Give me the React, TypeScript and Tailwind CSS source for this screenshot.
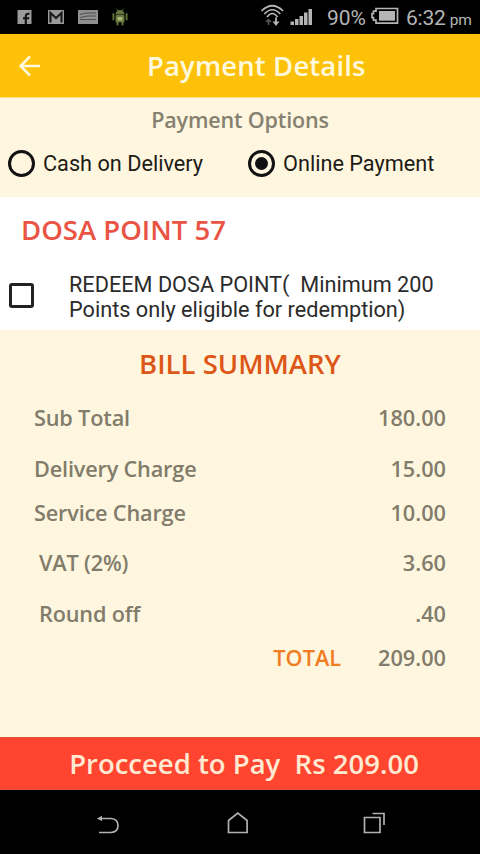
import { useState } from "react";

interface BillRow {
    label: string;
    amount: string;
    className: string;
}

const billRows: BillRow[] = [
    { label: "Sub Total", amount: "180.00", className: "h-[51px] pl-[34px]" },
    { label: "Delivery Charge", amount: "15.00", className: "h-[50px] pl-[34px]" },
    { label: "Service Charge", amount: "10.00", className: "h-[38px] pl-[34px]" },
    { label: "VAT (2%)", amount: "3.60", className: "h-[63px] pl-[39px]" },
    { label: "Round off", amount: ".40", className: "h-[38px] pl-[39px]" },
];

function StatusBar() {
    return (
        <div className="h-[34px] bg-black flex items-center text-[#b5b5b5] font-['Roboto',sans-serif]">
            <svg className="w-[130px] h-[34px]" viewBox="0 0 130 34">
                {/* Facebook */}
                <rect x="17.5" y="10" width="14" height="14" fill="#9a9a9a" />
                <path d="M25.8 24v-7.500q0-3.300 3.700-2.700M23 18.300h6.200" stroke="#111" strokeWidth="2.100" fill="none" />
                {/* Gmail */}
                <rect x="48" y="10" width="16" height="14" fill="#9a9a9a" />
                <path d="M50.500 22.500V13l5.500 5 5.500-5v9.500" stroke="#1c1c1c" strokeWidth="2.200" fill="none" />
                {/* Keyboard */}
                <rect x="78" y="10" width="20" height="14" fill="#8f8f8f" />
                <path d="M80 14.500l6-1.500h10M80 17.500l8-1.500h8M80 19.500h16" stroke="#505050" strokeWidth="1" fill="none" />
                {/* Android */}
                <g fill="#66753d">
                    <path d="M115.500 14.500q.5-4.500 4.500-4.500t4.500 4.500z" />
                    <rect x="115.500" y="15" width="9" height="7.500" rx="1" />
                    <rect x="112.500" y="13" width="1.800" height="7.500" rx=".9" />
                    <rect x="125.700" y="13" width="1.800" height="7.500" rx=".9" />
                    <rect x="116.500" y="22" width="2" height="3.500" rx=".9" />
                    <rect x="121.500" y="22" width="2" height="3.500" rx=".9" />
                    <path d="M116.500 8.500l1.500 2.500M123.500 8.500l-1.500 2.500" stroke="#66753d" strokeWidth=".8" />
                </g>
                <rect x="117.500" y="17" width="5" height="3.500" fill="#a9b577" />
            </svg>
            <svg className="w-[56px] h-[34px] ml-[130px]" viewBox="260 0 56 34">
                {/* Wi-Fi with transfer arrows */}
                <g fill="none" stroke="#b5b5b5" strokeWidth="1.700">
                    <path d="M261.500 11q10.800-10.500 21.600 0" />
                    <path d="M264.300 14q8-8.500 16 0" />
                    <path d="M267 17q5.300-7 10.600 0" />
                </g>
                <path d="M268.500 25v-5" stroke="#555" strokeWidth="1.600" />
                <path d="M265 22l3.500-3.500 3.500 3.500z" fill="#555" />
                <path d="M276 17.500v4.500" stroke="#b5b5b5" strokeWidth="1.800" />
                <path d="M272.500 21.500h7l-3.500 4.500z" fill="#b5b5b5" />
                <g fill="#b5b5b5">
                    <rect x="290.500" y="21.500" width="3.500" height="3.500" />
                    <rect x="295" y="19" width="3.500" height="6" />
                    <rect x="299.500" y="16" width="3.500" height="9" />
                    <rect x="304" y="12.500" width="3.500" height="12.500" />
                    <rect x="308.500" y="9" width="3.500" height="16" />
                </g>
            </svg>
            <span className="ml-[11px] w-[44px] text-[21px] leading-[34px] pt-px whitespace-nowrap">90%</span>
            <svg className="w-[28px] h-[34px]" viewBox="371 0 28 34">
                <path d="M376 8.500h21.500v14.700h-21.500v-3h-2.500v-2.500h-1.500v-4h1.500v-2.500h2.500z" fill="none" stroke="#b5b5b5" strokeWidth="1.700" />
                <rect x="379" y="11" width="16" height="9.700" fill="#b5b5b5" />
            </svg>
            <span className="ml-[7px] text-[21px] leading-[34px] pt-px whitespace-nowrap tracking-[-0.2px]">6:32</span>
            <span className="ml-[4px] text-[15.500px] leading-[34px] pt-[5px] tracking-[-0.1px]">pm</span>
        </div>
    );
}

function RadioOption({ label, checked, onSelect }: { label: string; checked: boolean; onSelect: () => void }) {
    return (
        <button role="radio" aria-checked={checked} onClick={onSelect} className="w-[240px] pl-2 flex items-center">
            <span className="w-[27px] h-[27px] rounded-full border-3 border-[#111] flex items-center justify-center shrink-0">
                {checked && <span className="w-[13px] h-[13px] rounded-full bg-[#111]" />}
            </span>
            <span className="ml-2 text-[21.700px] leading-[26px] text-[#1d1b16] whitespace-nowrap">{label}</span>
        </button>
    );
}

export default function App() {
    const [method, setMethod] = useState("online");
    const [redeem, setRedeem] = useState(false);

    return (
        <div className="w-[480px] h-[854px] flex flex-col overflow-hidden bg-[#fff6df] font-['Open_Sans',sans-serif]">
            <StatusBar />

            {/* Header */}
            <header className="h-[64px] bg-[#fec10a] border-b border-[#ffdf80] flex items-center shrink-0">
                <svg className="w-[24px] h-[24px] ml-[18px]" viewBox="0 0 24 24" fill="none" stroke="#fff9dc" strokeWidth="2.500">
                    <path d="M22 12H2.500M12 2.500L2.500 12l9.500 9.500" />
                </svg>
                <h1 className="ml-[105px] text-[27.500px] leading-[36px] font-semibold tracking-[0.120px] text-[#fff9dc] whitespace-nowrap">Payment Details</h1>
            </header>

            {/* Payment options */}
            <section className="h-[99px] shrink-0">
                <h2 className="pt-[7px] text-center text-[21.500px] leading-[29px] font-semibold tracking-[-0.150px] text-[#858070]">Payment Options</h2>
                <div role="radiogroup" className="mt-[16px] flex font-['Roboto',sans-serif]">
                    <RadioOption label="Cash on Delivery" checked={method === "cash"} onSelect={() => setMethod("cash")} />
                    <RadioOption label="Online Payment" checked={method === "online"} onSelect={() => setMethod("online")} />
                </div>
            </section>

            {/* Loyalty points */}
            <section className="h-[133px] shrink-0 bg-white">
                <h2 className="pl-[21px] pt-[15px] text-[27.500px] leading-[36px] font-semibold text-[#e95445] whitespace-nowrap">DOSA POINT 57</h2>
                <div className="mt-[24px] flex font-['Roboto',sans-serif]">
                    <button
                        role="checkbox"
                        aria-checked={redeem}
                        aria-label="Redeem"
                        onClick={() => setRedeem(!redeem)}
                        className={`ml-[9px] mt-[11px] w-[25px] h-[25px] rounded-[3px] border-3 border-[#222] shrink-0 ${redeem ? "bg-[#222]" : ""}`}
                    />
                    <p className="ml-[35px] text-[21.700px] leading-[25px] text-[#2b2b2b] whitespace-pre">
                        {"REDEEM DOSA POINT(  Minimum 200\nPoints only eligible for redemption)"}
                    </p>
                </div>
            </section>

            {/* Bill summary */}
            <section className="h-[407px] shrink-0 text-[21.700px] font-semibold text-[#817c6b]">
                <h2 className="pt-[16px] text-center text-[27.500px] leading-[36px] text-[#dc5718]">BILL SUMMARY</h2>
                <div className="mt-[11px]">
                    {billRows.map((row) => (
                        <div key={row.label} className={`flex items-center justify-between pr-[34px] ${row.className}`}>
                            <span className="tracking-[-0.180px]">{row.label}</span>
                            <span>{row.amount}</span>
                        </div>
                    ))}
                    <div className="h-[50px] pr-[34px] flex items-center justify-end">
                        <span className="text-[#f07c22]">TOTAL</span>
                        <span className="ml-[37px]">209.00</span>
                    </div>
                </div>
            </section>

            <button className="h-[53px] shrink-0 bg-[#ff452f] border-y border-[#e2523a] text-[27.500px] leading-[36px] font-semibold text-[#ffe9d2] whitespace-pre pl-[8px]">
                {"Procceed to Pay  Rs 209.00"}
            </button>

            {/* System navigation */}
            <nav className="h-[64px] shrink-0 bg-black">
                <svg className="w-full h-full" viewBox="0 790 480 64" fill="none" stroke="#b0b0b0" strokeWidth="1.700">
                    <path d="M99 832.500h12q7-.5 7-7t-7-7h-12" />
                    <path d="M97 818.500l5-2.700v5.400z" fill="#b0b0b0" stroke="none" />
                    <path d="M228.500 832.500v-12l9.300-7.500 9.300 7.500v12z" />
                    <path d="M364.500 817.500h15.500v15h-15.500zM372.500 813.500h11.500v11.500" />
                </svg>
            </nav>
        </div>
    );
}
